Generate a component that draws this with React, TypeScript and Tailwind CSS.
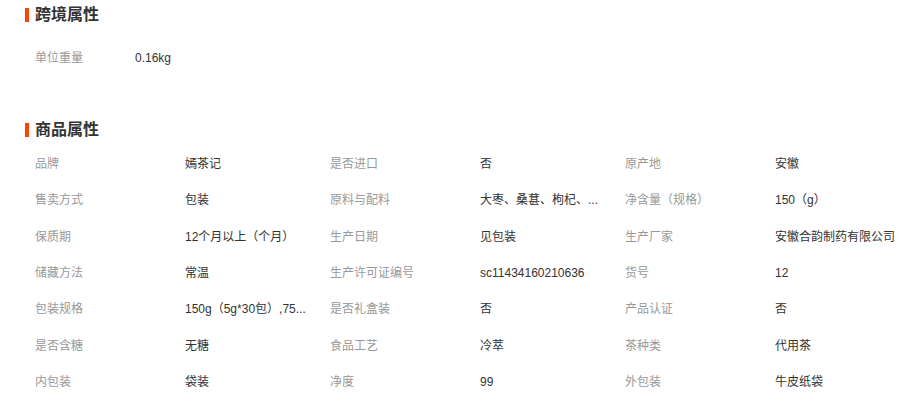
const crossBorder = [{ label: "单位重量", value: "0.16kg" }];

const attrs: [string, string][] = [
  ["品牌", "嫣茶记"],
  ["是否进口", "否"],
  ["原产地", "安徽"],
  ["售卖方式", "包装"],
  ["原料与配料", "大枣、桑葚、枸杞、..."],
  ["净含量（规格）", "150（g）"],
  ["保质期", "12个月以上（个月）"],
  ["生产日期", "见包装"],
  ["生产厂家", "安徽合韵制药有限公司"],
  ["储藏方法", "常温"],
  ["生产许可证编号", "sc11434160210636"],
  ["货号", "12"],
  ["包装规格", "150g（5g*30包）,75..."],
  ["是否礼盒装", "否"],
  ["产品认证", "否"],
  ["是否含糖", "无糖"],
  ["食品工艺", "冷萃"],
  ["茶种类", "代用茶"],
  ["内包装", "袋装"],
  ["净度", "99"],
  ["外包装", "牛皮纸袋"],
];

function SectionTitle({ title }: { title: string }) {
  return (
    <div className="flex h-[30px] items-center pl-[25px]">
      <span className="mr-[6px] h-[14px] w-1 bg-[#ff4400]" />
      <span className="text-base font-bold text-[#333]">{title}</span>
    </div>
  );
}

export default function App() {
  return (
    <div className="h-[402px] w-[923px] overflow-hidden bg-white font-['Liberation_Sans','Noto_Sans_CJK_SC',sans-serif] text-xs">
      <SectionTitle title="跨境属性" />
      {crossBorder.map((row) => (
        <div key={row.label} className="mt-[10px] flex h-[36px] items-center pl-[35px]">
          <span className="w-[100px] text-[#999]">{row.label}</span>
          <span className="text-[#333]">{row.value}</span>
        </div>
      ))}

      <div className="mt-[39px]">
        <SectionTitle title="商品属性" />
      </div>
      <div className="mt-px grid grid-cols-[150px_145px_150px_145px_150px_145px] pl-[35px]">
        {attrs.map(([label, value]) => (
          <div key={label} className="contents">
            <div className="flex h-[36.3px] items-center text-[#999]">{label}</div>
            <div className="flex h-[36.3px] items-center whitespace-nowrap text-[#333]">{value}</div>
          </div>
        ))}
      </div>
    </div>
  );
}
